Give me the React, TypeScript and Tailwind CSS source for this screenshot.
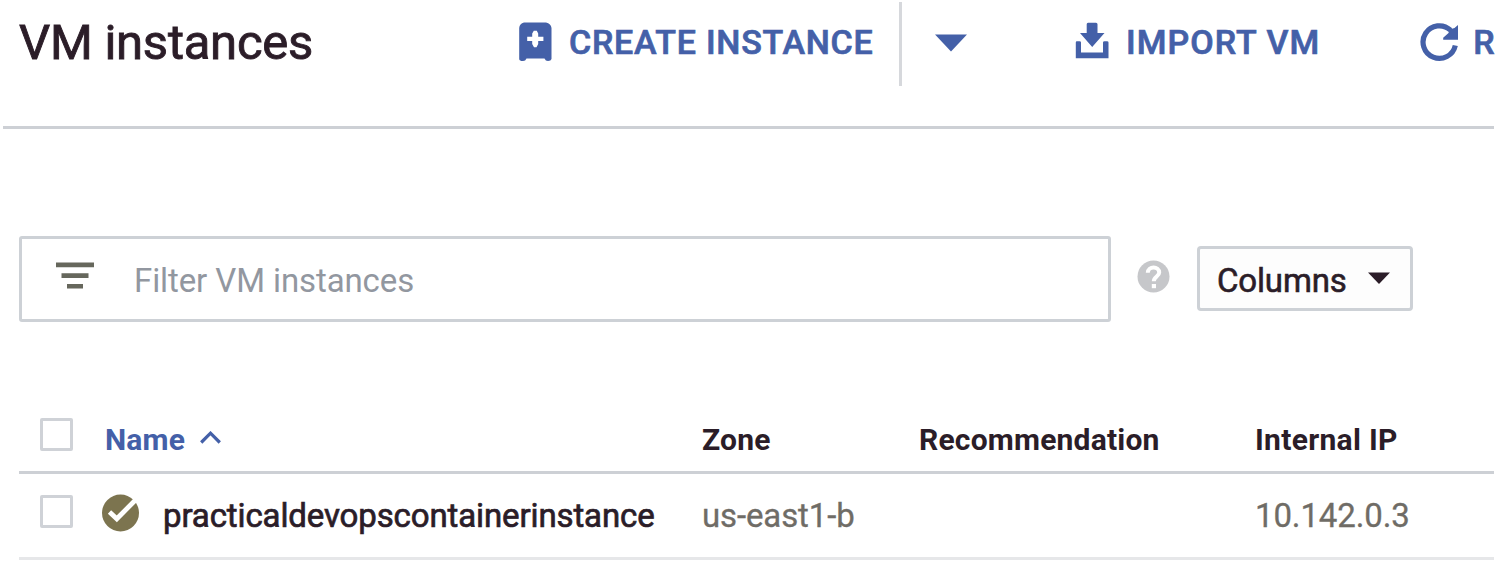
import type { ReactNode } from "react";

function CreateIcon() {
  return (
    <svg className="h-[40px] w-[34px] shrink-0" viewBox="0 0 34 40">
      <path
        fill="currentColor"
        d="M6 .5H28Q33 1.500 33.500 6V37Q33 39 30 39Q27.500 39 26.500 36.500H8.500Q7.500 39 5 39Q1.400 39 1.200 37V6Q1.500 1.500 6 .5Z"
      />
      <path d="M9.200 14.800H14.200V11.500L15.800 8.800H18.800L20.200 11.500V14.800H25.400V19H20.200V22L18.500 25.200H16L14.200 22V19H9.200Z" fill="#fff" />
    </svg>
  );
}

function ImportIcon() {
  return (
    <svg className="h-[37px] w-[34px] shrink-0" viewBox="0 0 34 37" fill="currentColor">
      <path d="M13 .8H21Q22.500.8 22.500 2.300V11H29.500L17.200 25L5 11H11.700V2.300Q11.700.8 13 .8Z" />
      <path d="M1.800 19.200H4.500Q6 19.200 6 20.500V30.500H28V20.500Q28 19.200 29.500 19.200H32Q33.500 19.200 33.500 20.500V36.300H.8V20.500Q.8 19.200 1.800 19.200Z" />
    </svg>
  );
}

function RefreshIcon() {
  return (
    <svg className="h-[40px] w-[39px] shrink-0" viewBox="0 0 39 40">
      <path d="M35.300 23.500A16.300 16.300 0 1 1 30.500 8.200" fill="none" stroke="currentColor" strokeWidth="5.200" />
      <path d="M38 3V17.800H23.200V15.800L28.500 11L29.500 7.500L34.500 6Z" fill="currentColor" />
    </svg>
  );
}

function FilterIcon() {
  return (
    <svg className="mb-[5px] h-[28px] w-[38px] shrink-0 text-[#66675c]" viewBox="0 0 38 28" fill="currentColor">
      <path d="M0 .5H38V5.300H0ZM5.500 11.300H32.500V16H5.500ZM11 22H27V26.500H11Z" />
    </svg>
  );
}

function HelpIcon() {
  return (
    <svg className="h-[33px] w-[33px] shrink-0" viewBox="0 0 33 33">
      <circle cx="16.500" cy="16.500" r="16" fill="#c6c7ca" />
      <path d="M10.800 12.800C11 5.600 22.200 5.800 22.200 12.500C22.200 16.500 16.800 16.500 16.800 21.200" fill="none" stroke="#fff" strokeWidth="4" />
      <rect x="14.800" y="24" width="4.200" height="4.200" fill="#fff" />
    </svg>
  );
}

function StatusOkIcon() {
  return (
    <svg className="h-[38px] w-[38px] shrink-0" viewBox="0 0 38 38">
      <circle cx="18.500" cy="19" r="18.500" fill="#7c744f" />
      <path d="M7.500 18L14.800 24.800L34.500 5" fill="none" stroke="#fff" strokeWidth="4.800" />
    </svg>
  );
}

function Checkbox() {
  return <span className="block size-[33px] shrink-0 rounded-[2px] border-[3px] border-[#cfd2d7] bg-white" />;
}

function ToolbarText({ children }: { children: ReactNode }) {
  return (
    <span className="text-[34px] leading-[40px] font-medium whitespace-nowrap [-webkit-text-stroke:0.7px_currentColor]">
      {children}
    </span>
  );
}

const columns = "grid grid-cols-[21px_65px_597px_217px_337px_1fr]";

export default function App() {
  return (
    <div className="h-[565px] w-[1499px] overflow-hidden bg-white pr-[5px] font-['Roboto',sans-serif] text-[#2b1d28]">
      <header className="ml-[3px] flex h-[129px] items-start border-b-[3px] border-[#cdd0d5]">
        <h1 className="mt-[14px] ml-[16px] w-[499px] shrink-0 text-[49px] leading-[57px] tracking-[-0.25px] whitespace-nowrap [-webkit-text-stroke:0.9px_currentColor]">
          VM instances
        </h1>
        <div className="flex h-[84px] shrink-0 text-[#4460a8]">
          <button className="mt-[2px] flex h-[84px] w-[384px] items-center gap-[17px] border-r-[3px] border-[#d6d8dc] pb-[4px] tracking-[0.75px]">
            <CreateIcon />
            <ToolbarText>CREATE INSTANCE</ToolbarText>
          </button>
          <button className="mt-[34px] ml-[32px] h-[18px] w-[34px]" aria-label="More create options">
            <svg className="h-[18px] w-[34px]" viewBox="0 0 34 18" fill="currentColor">
              <path d="M1 .5H33L17 17.500Z" />
            </svg>
          </button>
          <button className="ml-[107px] flex h-[82px] items-center gap-[17px] tracking-[1.050px]">
            <span className="mb-[2px]">
              <ImportIcon />
            </span>
            <span className="mt-[2px] flex">
              <ToolbarText>IMPORT VM</ToolbarText>
            </span>
          </button>
          <button className="ml-[100px] flex h-[84px] items-center gap-[14px]">
            <RefreshIcon />
            <ToolbarText>R</ToolbarText>
          </button>
        </div>
      </header>

      <section className="mt-[107px] ml-[19px] flex h-[85px] items-center">
        <div className="flex h-[86px] w-[1092px] shrink-0 items-center rounded-[3px] border-[3px] border-[#cdd1d6] pl-[34px]">
          <FilterIcon />
          <span className="mt-[4px] ml-[40px] text-[33px] leading-[40px] tracking-[-0.1px] text-[#9297a0]">Filter VM instances</span>
        </div>
        <span className="mb-[5px] ml-[26px]">
          <HelpIcon />
        </span>
        <button className="ml-[27px] flex h-[65px] w-[216px] items-center rounded-[4px] border-[3px] border-[#cdd1d6] bg-[#fdfdfd] pl-[17px]">
          <span className="mt-[4px] text-[33px] leading-[40px] tracking-[-0.15px] [-webkit-text-stroke:0.6px_currentColor]">Columns</span>
          <svg className="mb-[1px] ml-[21px] h-[12px] w-[22px]" viewBox="0 0 22 12" fill="currentColor">
            <path d="M0 .5H22L11 12Z" />
          </svg>
        </button>
      </section>

      <section className="mt-[80px] ml-[19px]">
        <div className={`${columns} h-[73px] items-start border-b-[3px] border-[#cdd0d5] text-[30px] leading-[36px] font-bold tracking-[0.2px]`}>
          <span />
          <div className="mt-[17px]">
            <Checkbox />
          </div>
          <div className="mt-[21px] flex items-center text-[#4460a8]">
            <span>Name</span>
            <svg className="mb-[6px] ml-[15px] h-[13px] w-[21px]" viewBox="0 0 21 13" fill="none" stroke="currentColor" strokeWidth="3.200">
              <path d="M1.200 11.500L10.500 2.200L19.800 11.500" />
            </svg>
          </div>
          <span className="mt-[21px]">Zone</span>
          <span className="mt-[21px]">Recommendation</span>
          <span className="mt-[21px] -ml-px tracking-[0.3px]">Internal IP</span>
        </div>
        <div className={`${columns} h-[86px] items-start border-b-[3px] border-[#e6e7e9] text-[33px] leading-[40px] tracking-[-0.120px]`}>
          <span />
          <div className="mt-[21px]">
            <Checkbox />
          </div>
          <div className="mt-[20px] -ml-[3px] flex items-start">
            <StatusOkIcon />
            <span className="mt-[2px] ml-[23px] [-webkit-text-stroke:0.7px_currentColor]">practicaldevopscontainerinstance</span>
          </div>
          <span className="mt-[22px] text-[#6f6c66] [-webkit-text-stroke:0.3px_currentColor]">us-east1-b</span>
          <span />
          <span className="mt-[22px] -ml-px text-[#6f6c66] [-webkit-text-stroke:0.3px_currentColor]">10.142.0.3</span>
        </div>
      </section>
    </div>
  );
}
